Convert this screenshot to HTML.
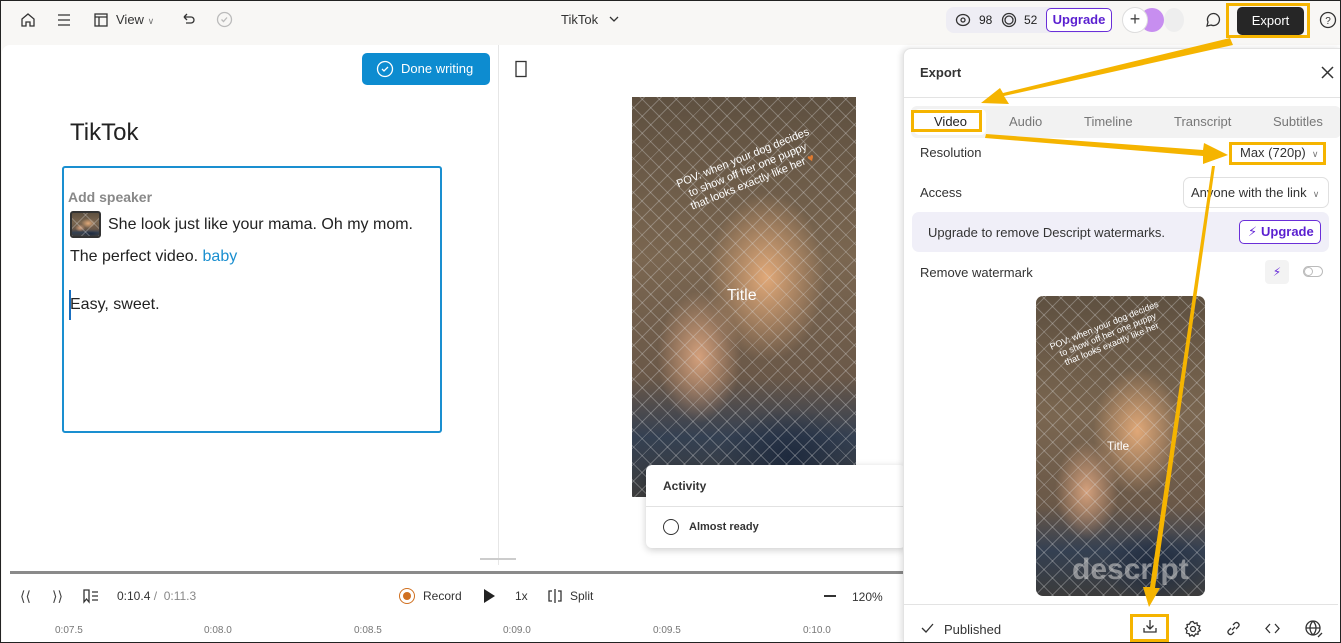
<!DOCTYPE html>
<html><head><meta charset="utf-8"><style>
*{box-sizing:border-box;margin:0;padding:0}
body{width:1341px;height:643px;overflow:hidden;font-family:"Liberation Sans",sans-serif;color:#222;background:#f8f7f5;position:relative;font-size:13px}
.a{position:absolute}
.frame{position:absolute;left:0;top:0;width:1341px;height:643px;border:1px solid #222;pointer-events:none;z-index:50}
svg.i{position:absolute;fill:none;stroke:#333;stroke-width:1.3}
.photo{background:
 repeating-linear-gradient(45deg,rgba(220,220,220,.3) 0 1px,transparent 1px 12px),
 repeating-linear-gradient(-45deg,rgba(220,220,220,.3) 0 1px,transparent 1px 12px),
 radial-gradient(ellipse 35% 28% at 60% 45%,#e0a878,transparent 75%),
 radial-gradient(ellipse 25% 22% at 30% 65%,#d4a07c,transparent 75%),
 radial-gradient(ellipse 40% 15% at 70% 90%,#1e2a3e,transparent 80%),
 linear-gradient(#5e5040,#7a6650 40%,#6a5848 70%,#344052 85%,#3c3c3c)}
.ob{border:3px solid #f5b400}
</style></head><body>
<div class="frame"></div>
<svg class="i" style="left:19px;top:11px" width="18" height="18" viewBox="0 0 18 18"><path d="M3 8 L9 3 L15 8 V15 H11 V11 H7 V15 H3 Z"/></svg>
<svg class="i" style="left:56px;top:12px" width="16" height="16"><path d="M2 3H14M2 8H14M2 13H14"/></svg>
<svg class="i" style="left:93px;top:12px" width="16" height="16"><rect x="2" y="2" width="12" height="12"/><path d="M2 5H14M6 5V14"/></svg>
<div class="a" style="left:116px;top:12px;font-size:13px;color:#333">View <span style="font-size:9px;color:#777">&#8744;</span></div>
<svg class="i" style="left:180px;top:11px" width="16" height="16"><path d="M4 6H11A3 3 0 0 1 11 12H6M4 6L7 3M4 6L7 9"/></svg>
<svg class="i" style="left:216px;top:11px;stroke:#bbb" width="17" height="17"><circle cx="8.5" cy="8.5" r="7"/><path d="M5.5 8.5L7.5 10.5L11 6.5"/></svg>
<div class="a" style="left:561px;top:12px;font-size:13px;color:#333">TikTok</div>
<svg class="i" style="left:608px;top:14px" width="12" height="10"><path d="M2 3L6 7L10 3"/></svg>
<div class="a" style="left:946px;top:7px;width:162px;height:26px;background:#eeedf4;border-radius:8px"></div>
<svg class="i" style="left:955px;top:12px" width="16" height="16"><ellipse cx="8" cy="8" rx="6.5" ry="5.5"/><circle cx="8" cy="8" r="2"/></svg>
<div class="a" style="left:979px;top:13px;font-size:12px">98</div>
<svg class="i" style="left:1001px;top:12px" width="16" height="16"><circle cx="8" cy="8" r="6.5"/><circle cx="8" cy="8" r="4"/></svg>
<div class="a" style="left:1024px;top:13px;font-size:12px">52</div>
<div class="a" style="left:1046px;top:8px;width:66px;height:24px;border:1.5px solid #6a2fd8;border-radius:5px;color:#5a1fd0;font-weight:bold;font-size:13px;text-align:center;line-height:21px;background:#fff">Upgrade</div>
<div class="a" style="left:1164px;top:8px;width:20px;height:24px;border-radius:50%;background:#eee"></div>
<div class="a" style="left:1140px;top:8px;width:24px;height:24px;border-radius:50%;background:#c78ef0"></div>
<div class="a" style="left:1122px;top:7px;width:26px;height:26px;border-radius:50%;background:#fff;border:1px solid #ddd;text-align:center;line-height:22px;font-size:18px;color:#444">+</div>
<svg class="i" style="left:1203px;top:11px" width="18" height="18"><path d="M4 15L5 11A6 6 0 1 1 8 14Z"/></svg>
<div class="a ob" style="left:1226px;top:3px;width:84px;height:35px"></div>
<div class="a" style="left:1237px;top:7px;width:67px;height:28px;background:#262626;border-radius:5px;color:#fff;font-size:13px;text-align:center;line-height:28px">Export</div>
<svg class="i" style="left:1319px;top:11px" width="18" height="18"><circle cx="9" cy="9" r="7.5"/><text x="9" y="13" font-size="10" text-anchor="middle" fill="#333" stroke="none" font-family="Liberation Sans">?</text></svg>

<div class="a" style="left:2px;top:45px;width:1338px;height:598px;background:#fff;border-radius:8px 0 0 0"></div>
<div class="a" style="left:498px;top:45px;width:1px;height:520px;background:#e6e6e6"></div>
<div class="a" style="left:362px;top:53px;width:128px;height:32px;background:#0d8cd0;border-radius:5px;color:#fff;font-size:13px;line-height:32px;padding-left:39px">Done writing</div>
<svg class="i" style="left:376px;top:60px;stroke:#fff" width="18" height="18"><circle cx="9" cy="9" r="7.5"/><path d="M6 9L8 11L12 7"/></svg>
<svg class="i" style="left:514px;top:60px" width="14" height="18"><rect x="2" y="1.5" width="10" height="15"/></svg>
<div class="a" style="left:70px;top:119px;font-size:24px;color:#222">TikTok</div>
<div class="a" style="left:62px;top:166px;width:380px;height:267px;border:2px solid #1a8fd0;border-radius:3px"></div>
<div class="a" style="left:68px;top:189px;font-size:14px;font-weight:bold;color:#888">Add speaker</div>
<div class="a photo" style="left:70px;top:211px;width:31px;height:27px;border:2px solid #333;border-radius:3px"></div>
<div class="a" style="left:108px;top:216px;font-size:16px;color:#222">She look just like your mama. Oh my mom.</div>
<div class="a" style="left:70px;top:248px;font-size:16px;color:#222">The perfect video. <span style="color:#1a8fd0">baby</span></div>
<div class="a" style="left:70px;top:296px;font-size:16px;color:#222">Easy, sweet.</div>
<div class="a" style="left:69px;top:290px;width:2px;height:30px;background:#1a6fc0"></div>

<div class="a photo" style="left:632px;top:97px;width:224px;height:400px"></div>
<div class="a" style="left:648px;top:190px;font-size:11px;color:#fff;transform:rotate(-22deg);transform-origin:left top;line-height:13px;width:200px;text-align:center">POV: when your dog decides<br>to show off her one puppy<br>that looks exactly like her <span style="color:#e07a30">&#9829;</span></div>
<div class="a" style="left:727px;top:287px;font-size:16px;color:#fff">Title</div>
<div class="a" style="left:646px;top:465px;width:260px;height:83px;background:#fff;border-radius:6px;box-shadow:0 2px 8px rgba(0,0,0,.2)"></div>
<div class="a" style="left:663px;top:479px;font-size:12px;font-weight:bold;color:#333">Activity</div>
<div class="a" style="left:646px;top:506px;width:260px;height:1px;background:#e2e2e2"></div>
<div class="a" style="left:663px;top:519px;width:16px;height:16px;border:1.3px solid #333;border-radius:50%"></div>
<div class="a" style="left:689px;top:521px;font-size:11px;font-weight:bold;color:#333">Almost ready</div>

<div class="a" style="left:480px;top:558px;width:36px;height:2px;background:#ccc"></div>
<div class="a" style="left:10px;top:571px;width:1045px;height:3px;background:#8a8a8a"></div>
<div class="a" style="left:20px;top:588px;font-size:14px;color:#444">&#10216;&#10216;</div>
<div class="a" style="left:52px;top:588px;font-size:14px;color:#444">&#10217;&#10217;</div>
<svg class="i" style="left:82px;top:588px" width="18" height="16"><path d="M2 2H7V14L4.5 11L2 14Z M10 4H16M10 8H16M10 12H16"/></svg>
<div class="a" style="left:117px;top:589px;font-size:12px;color:#333">0:10.4 <span style="color:#888">/ &nbsp;0:11.3</span></div>
<div class="a" style="left:399px;top:588px;width:16px;height:16px;border:1.5px solid #d07020;border-radius:50%"></div>
<div class="a" style="left:403px;top:592px;width:8px;height:8px;background:#d07020;border-radius:50%"></div>
<div class="a" style="left:423px;top:589px;font-size:12px;color:#333">Record</div>
<div class="a" style="left:484px;top:589px;width:0;height:0;border-left:11px solid #222;border-top:7px solid transparent;border-bottom:7px solid transparent"></div>
<div class="a" style="left:515px;top:589px;font-size:12px;color:#333">1x</div>
<svg class="i" style="left:547px;top:588px" width="16" height="16"><path d="M8 1V15M5 3H2V13H5M11 3H14V13H11"/></svg>
<div class="a" style="left:570px;top:589px;font-size:12px;color:#333">Split</div>
<div class="a" style="left:824px;top:595px;width:12px;height:1.5px;background:#333"></div>
<div class="a" style="left:852px;top:590px;font-size:12px;color:#333">120%</div>
<div class="a" style="left:0;top:625px;width:905px;font-size:10px;color:#777">
<span class="a" style="left:55px">0:07.5</span><span class="a" style="left:204px">0:08.0</span><span class="a" style="left:354px">0:08.5</span><span class="a" style="left:503px">0:09.0</span><span class="a" style="left:653px">0:09.5</span><span class="a" style="left:803px">0:10.0</span></div>

<div class="a" style="left:903px;top:48px;width:438px;height:595px;background:#fff;border-radius:8px 0 0 0;box-shadow:-2px 0 6px rgba(0,0,0,.12);border:1px solid #e3e3e3"></div>
<div class="a" style="left:920px;top:65px;font-size:13px;font-weight:bold;color:#333">Export</div>
<svg class="i" style="left:1320px;top:65px;stroke-width:1.5" width="15" height="15"><path d="M2 2L13 13M13 2L2 13"/></svg>
<div class="a" style="left:904px;top:97px;width:437px;height:1px;background:#e3e3e3"></div>
<div class="a" style="left:911px;top:106px;width:430px;height:32px;background:#f2f2f2;border-radius:6px"></div>
<div class="a" style="left:914px;top:109px;width:72px;height:26px;background:#fff;border-radius:5px"></div>
<div class="a ob" style="left:911px;top:110px;width:71px;height:22px"></div>
<div class="a" style="left:934px;top:114px;font-size:13px;color:#222">Video</div>
<div class="a" style="left:1009px;top:114px;font-size:13px;color:#777">Audio</div>
<div class="a" style="left:1084px;top:114px;font-size:13px;color:#777">Timeline</div>
<div class="a" style="left:1174px;top:114px;font-size:13px;color:#777">Transcript</div>
<div class="a" style="left:1273px;top:114px;font-size:13px;color:#777">Subtitles</div>
<div class="a" style="left:920px;top:145px;font-size:13px;color:#333">Resolution</div>
<div class="a ob" style="left:1229px;top:142px;width:97px;height:23px"></div>
<div class="a" style="left:1240px;top:145px;font-size:13px;color:#333">Max (720p) <span style="font-size:9px;color:#777">&nbsp;&#8744;</span></div>
<div class="a" style="left:920px;top:185px;font-size:13px;color:#333">Access</div>
<div class="a" style="left:1183px;top:177px;width:146px;height:31px;border:1px solid #e0e0e0;border-radius:7px;font-size:13px;color:#333;line-height:29px;padding-left:7px">Anyone with the link <span style="font-size:9px;color:#777">&nbsp;&#8744;</span></div>
<div class="a" style="left:912px;top:212px;width:417px;height:40px;background:#f0eff8;border-radius:7px"></div>
<div class="a" style="left:928px;top:225px;font-size:13px;color:#333">Upgrade to remove Descript watermarks.</div>
<div class="a" style="left:1239px;top:220px;width:82px;height:24px;border:1.5px solid #6a2fd8;border-radius:5px;background:#fff;color:#5a1fd0;font-weight:bold;font-size:13px;line-height:21px;padding-left:21px">Upgrade</div>
<div class="a" style="left:1248px;top:224px;color:#6a2fd8;font-size:13px">&#9889;&#xFE0E;</div>
<div class="a" style="left:920px;top:265px;font-size:13px;color:#333">Remove watermark</div>
<div class="a" style="left:1265px;top:260px;width:24px;height:24px;background:#f3f3f3;border-radius:4px;color:#6a2fd8;text-align:center;line-height:24px;font-size:12px">&#9889;&#xFE0E;</div>
<div class="a" style="left:1303px;top:266px;width:20px;height:11px;border:1px solid #bbb;border-radius:6px"></div>
<div class="a" style="left:1304px;top:267px;width:9px;height:9px;border:1px solid #bbb;border-radius:50%"></div>
<div class="a photo" style="left:1036px;top:296px;width:169px;height:300px;border-radius:7px"></div>
<div class="a" style="left:1042px;top:345px;font-size:9px;color:#fff;transform:rotate(-22deg);transform-origin:left top;line-height:10px;width:130px;text-align:center">POV: when your dog decides<br>to show off her one puppy<br>that looks exactly like her</div>
<div class="a" style="left:1107px;top:439px;font-size:12px;color:#fff">Title</div>
<div class="a" style="left:1072px;top:553px;font-size:30px;font-weight:bold;color:rgba(200,200,200,.6)">descript</div>
<div class="a" style="left:904px;top:604px;width:434px;height:1px;background:#e3e3e3"></div>
<svg class="i" style="left:920px;top:621px" width="15" height="14"><path d="M2 7L6 11L13 3"/></svg>
<div class="a" style="left:944px;top:622px;font-size:13px;color:#333">Published</div>
<div class="a ob" style="left:1130px;top:614px;width:39px;height:28px"></div>
<svg class="i" style="left:1142px;top:618px" width="16" height="16"><path d="M8 2V11M4.5 7.5L8 11L11.5 7.5M2 10V14H14V10"/></svg>
<svg class="i" style="left:1184px;top:620px" width="18" height="18"><circle cx="9" cy="9" r="2.5"/><path d="M9 1.5L10.5 3.5L13 2.8L13.3 5.3L15.8 6L14.8 8.5L16.3 10.5L14 11.7L14 14.3L11.5 14L10 16.3L8 14.8L5.8 16L5 13.6L2.5 13L3 10.5L1.5 8.5L3.5 7L3 4.5L5.5 4.2L6.5 2Z"/></svg>
<svg class="i" style="left:1225px;top:620px" width="17" height="17"><path d="M7 10L10 7M6 8L3.5 10.5A2.5 2.5 0 0 0 7 14L9 12M11 9L13.5 6.5A2.5 2.5 0 0 0 10 3L8 5"/></svg>
<svg class="i" style="left:1264px;top:621px" width="17" height="15"><path d="M6 3L2 7.5L6 12M11 3L15 7.5L11 12"/></svg>
<svg class="i" style="left:1304px;top:619px" width="20" height="20"><circle cx="9" cy="9" r="7"/><path d="M2 9H16M9 2C5 6 5 12 9 16M9 2C13 6 13 12 9 16M14 18L18 14"/></svg>

<svg class="a" style="left:0;top:0;z-index:40" width="1341" height="643">
<g fill="#f5b400">
<polygon points="1230,38 1233,45 1004,96 1009,104 981,103 1000,88 1003,93"/>
<polygon points="985,138 986,134 1203,150 1204,143 1228,155 1203,164 1203,156"/>
<polygon points="1212,166 1215,166 1155,588 1160,588 1149,607 1143,587 1150,587"/>
</g>
</svg>
</body></html>
